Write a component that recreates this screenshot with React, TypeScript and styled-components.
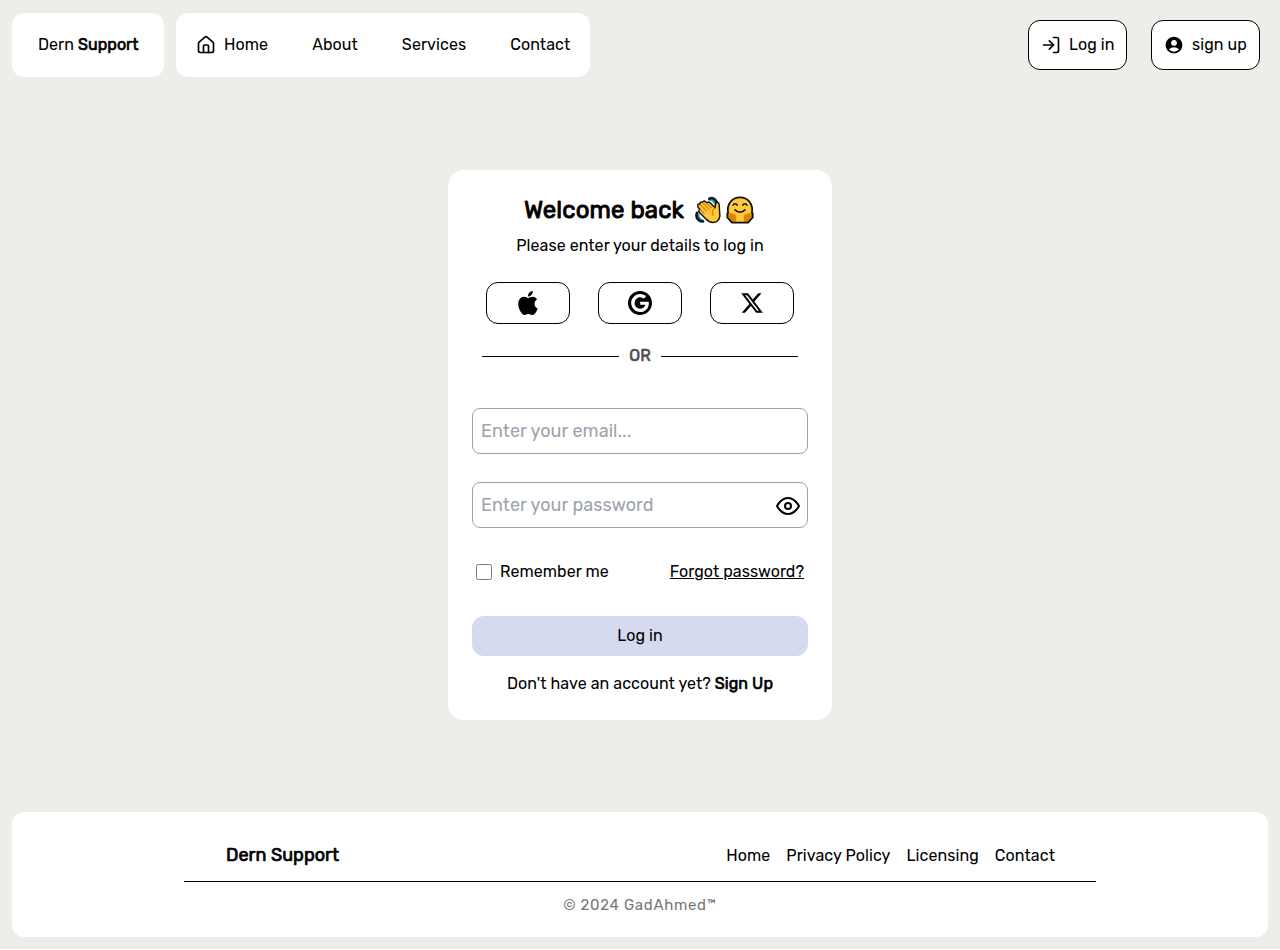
import React from "react";
import styled, { createGlobalStyle } from "styled-components";
import { House, LogIn } from "lucide-react";
import { MdAccountCircle } from "react-icons/md";
import { FaXTwitter } from "react-icons/fa6";
import { ImAppleinc, ImGoogle3 } from "react-icons/im";
import { FiEye } from "react-icons/fi";

const GlobalStyle = createGlobalStyle`
  *, *::before, *::after { box-sizing: border-box; }
  body {
    margin: 0;
    background: #fff;
    color: #000;
    font-family: Rubik, Roboto, "Liberation Sans", sans-serif;
    font-size: 16px;
    line-height: 24px;
    letter-spacing: 0.06px;
  }
  svg { display: block; flex-shrink: 0; }
  a { color: inherit; text-decoration: none; }
  button, input { letter-spacing: inherit; }
`;

const Page = styled.div`
  display: flex;
  flex-direction: column;
  height: 949px;
  padding: 13px 12px 12px;
  background: #edeee9;
`;

const Header = styled.header`
  display: flex;
  align-items: center;
  gap: 12px;
  height: 64px;
`;

const Panel = styled.div`
  display: flex;
  align-items: center;
  height: 64px;
  background: #fff;
  border-radius: 12px;
`;

const Brand = styled(Panel)`
  width: 152px;
  padding-left: 26px;
  white-space: pre;
`;

const Nav = styled(Panel).attrs({ as: "nav" })`
  width: 414px;
  padding-left: 20px;
  gap: 44px;
`;

const NavLink = styled.a`
  display: flex;
  align-items: center;
  gap: 8px;
  letter-spacing: 0.08px;
  white-space: nowrap;
`;

const Strong = styled.span`
  -webkit-text-stroke: 0.65px currentColor;
`;

const Actions = styled.div`
  display: flex;
  gap: 24px;
  margin-left: auto;
  margin-right: 8px;
`;

const OutlineButton = styled.button<{ $width: number }>`
  display: flex;
  align-items: center;
  gap: 8px;
  width: ${(p) => p.$width}px;
  height: 50px;
  padding: 0 0 0 12px;
  border: 1px solid #000;
  border-radius: 12px;
  background: #fff;
  color: #000;
  font: inherit;
  white-space: nowrap;
`;

const Main = styled.main`
  flex: 1;
  display: flex;
  justify-content: center;
  align-items: flex-start;
  padding-top: 93px;
`;

const Card = styled.form`
  display: flex;
  flex-direction: column;
  width: 384px;
  height: 550px;
  padding: 24px;
  border-radius: 16px;
  background: #fff;
`;

const Title = styled.h1`
  display: flex;
  align-items: center;
  margin: 0 0 0 52px;
  height: 32px;
  font-size: 24px;
  line-height: 32px;
  font-weight: 400;
  letter-spacing: 0.1px;
  white-space: nowrap;
  -webkit-text-stroke: 0.9px currentColor;
`;

const TitleText = styled.span`
  width: 170px;
`;

const Centered = styled.p<{ $top: number }>`
  margin: ${(p) => p.$top}px 0 0;
  text-align: center;
  white-space: nowrap;
`;

const SocialRow = styled.div`
  display: flex;
  justify-content: center;
  gap: 28px;
  margin-top: 24px;
`;

const SocialButton = styled.button`
  display: flex;
  align-items: center;
  justify-content: center;
  width: 84px;
  height: 42px;
  padding: 0;
  border: 1px solid #000;
  border-radius: 12px;
  background: #fff;
  color: #000;
`;

const Divider = styled.div`
  display: flex;
  align-items: center;
  gap: 10px;
  margin: 20px 10px 0;
  color: #4b4f55;
  -webkit-text-stroke: 0.65px currentColor;

  &::before, &::after {
    content: "";
    flex: 1;
    height: 1px;
    margin-top: 1px;
    background: #000;
  }
`;

const Field = styled.label<{ $top: number }>`
  display: flex;
  align-items: center;
  height: 46px;
  margin-top: ${(p) => p.$top}px;
  padding: 0 7px 0 8px;
  border: 1px solid #9ca3af;
  border-radius: 8px;

  svg { margin-top: 2px; }
`;

const Input = styled.input`
  flex: 1;
  min-width: 0;
  padding: 0;
  border: 0;
  outline: 0;
  background: transparent;
  font: inherit;
  font-size: 18px;
  &::placeholder { color: #9ca3af; opacity: 1; }
`;

const Options = styled.div`
  display: flex;
  align-items: center;
  justify-content: space-between;
  margin: 32px 4px 0;
`;

const Remember = styled.label`
  display: flex;
  align-items: center;
  gap: 8px;
`;

const Checkbox = styled.input`
  width: 16px;
  height: 16px;
  margin: 0;
`;

const Forgot = styled.a`
  && { text-decoration: underline; }
`;

const Submit = styled.button`
  height: 40px;
  margin-top: 32px;
  border: 0;
  border-radius: 12px;
  background: #d6daf0;
  color: #000;
  font: inherit;
`;

const Footer = styled.footer`
  display: flex;
  flex-direction: column;
  align-items: center;
  height: 125px;
  padding-top: 30px;
  border-radius: 12px;
  background: #fff;
`;

const FooterTop = styled.div`
  display: flex;
  align-items: flex-start;
  justify-content: space-between;
  width: 912px;
  height: 40px;
  padding: 0 41px 0 42px;
  border-bottom: 1px solid #000;
`;

const FooterBrand = styled.div`
  margin-top: 1px;
  font-size: 18px;
  -webkit-text-stroke: 0.7px currentColor;
`;

const FooterLinks = styled.nav`
  display: flex;
  gap: 16px;
  margin-top: 2px;
`;

const Copyright = styled.div`
  margin-top: 11px;
  color: #777;
  font-size: 15px;
  letter-spacing: 0.68px;
`;

const Emoji = styled.svg<{ $size: number; $gap: number }>`
  width: ${(p) => p.$size}px;
  height: 28px;
  margin-left: ${(p) => p.$gap}px;
`;

const WavingHand = () => (
  <Emoji $size={27} $gap={1} viewBox="0 0 28 28" role="img" aria-label="waving hand" strokeLinecap="round" strokeLinejoin="round">
    <path d="M15 2.500c4-2 9 2 7.200 7.500M2.200 17c-1.700 4.500 1 8.500 6 8.800" fill="#2794ad" stroke="#101b20" strokeWidth="3" />
    <path d="M16.500 4c2-.3 4 1.400 4.200 3.700M4 19c-.2 2.500 1.500 4.700 3.800 5" fill="none" stroke="#2ba6bd" strokeWidth="1.500" />
    <path d="M3 10.200c-1-1.800 1-3.200 2.200-2-.8-1.800 1.200-3.400 2.600-2 .2-1.500 2-2.100 3.200-.8l1.300 1.300c.5-1.200 2.100-1.500 3.200-.4l5.200 5.400c.8-.8.100-3.800 1-5 1-1.300 3.200-.6 3.300 1.300L25.800 20c-.2 4.200-3.400 7-7.300 7-3.300 0-5.300-1.600-7.400-3.800L4.600 16.500c-1.400-1.500-.5-3 .6-3.200L3.300 11.500Z" fill="#ffc83d" stroke="#111" strokeWidth="1.500" />
    <path d="m5.400 8.400 6.500 6.400M8 6.500l6.600 6.600M12.300 7l4.600 4.600M5.300 13.400l4.200 4.200M20.800 12c-3 2-3.600 5-1.800 7.700" fill="none" stroke="#d67d00" strokeWidth="1.200" />
  </Emoji>
);

const HuggingFace = () => (
  <Emoji $size={28} $gap={4} viewBox="0 0 28 28" role="img" aria-label="hugging face" strokeLinecap="round" strokeLinejoin="round">
    <path d="M1.300 17.500l.8-.6C.6 8 6 1.300 14 1.300S27.400 8 25.900 16.900l.8.600V21.500L22 26.700H6L1.300 21.500Z" fill="#ffc83d" />
    <path d="M1.800 17.400 4.500 17l5.700 2v7.500H6L1.500 21.500Zm24.400 0L23.500 17l-5.700 2v7.500H22l4.500-5Z" fill="#d68a00" />
    <path d="M1.300 17.500l.8-.6C.6 8 6 1.300 14 1.300S27.400 8 25.900 16.900l.8.600V21.500L22 26.700H6L1.300 21.500Z" fill="none" stroke="#111" strokeWidth="1.800" />
    <path d="M7 9.300c.8-2 3.400-2 4.200 0m5.600 0c.8-2 3.400-2 4.200 0M9 13.800c2.300 3.300 7.700 3.300 10 0" fill="none" stroke="#111" strokeWidth="1.500" />
  </Emoji>
);

export default function App() {
  return (
    <>
      <GlobalStyle />
      <Page>
        <Header>
          <Brand>
            Dern <Strong>Support</Strong>
          </Brand>
          <Nav>
            <NavLink href="#">
              <House size={20} />
              Home
            </NavLink>
            <NavLink href="#">About</NavLink>
            <NavLink href="#">Services</NavLink>
            <NavLink href="#">Contact</NavLink>
          </Nav>
          <Actions>
            <OutlineButton $width={99}>
              <LogIn size={20} />
              Log in
            </OutlineButton>
            <OutlineButton $width={109}>
              <MdAccountCircle size={20} />
              sign up
            </OutlineButton>
          </Actions>
        </Header>

        <Main>
          <Card>
            <Title>
              <TitleText>Welcome back</TitleText>
              <WavingHand />
              <HuggingFace />
            </Title>
            <Centered $top={8}>Please enter your details to log in</Centered>
            <SocialRow>
              <SocialButton type="button" aria-label="Apple"><ImAppleinc size={24} /></SocialButton>
              <SocialButton type="button" aria-label="Google"><ImGoogle3 size={24} /></SocialButton>
              <SocialButton type="button" aria-label="X"><FaXTwitter size={24} /></SocialButton>
            </SocialRow>
            <Divider>OR</Divider>
            <Field $top={40}>
              <Input type="email" placeholder="Enter your email..." />
            </Field>
            <Field $top={28}>
              <Input type="password" placeholder="Enter your password" />
              <FiEye size={24} />
            </Field>
            <Options>
              <Remember>
                <Checkbox type="checkbox" />
                Remember me
              </Remember>
              <Forgot href="#">Forgot password?</Forgot>
            </Options>
            <Submit type="button">Log in</Submit>
            <Centered $top={16}>
              Don't have an account yet? <Strong>Sign Up</Strong>
            </Centered>
          </Card>
        </Main>

        <Footer>
          <FooterTop>
            <FooterBrand>Dern Support</FooterBrand>
            <FooterLinks>
              <NavLink href="#">Home</NavLink>
              <NavLink href="#">Privacy Policy</NavLink>
              <NavLink href="#">Licensing</NavLink>
              <NavLink href="#">Contact</NavLink>
            </FooterLinks>
          </FooterTop>
          <Copyright>© 2024 GadAhmed™</Copyright>
        </Footer>
      </Page>
    </>
  );
}
